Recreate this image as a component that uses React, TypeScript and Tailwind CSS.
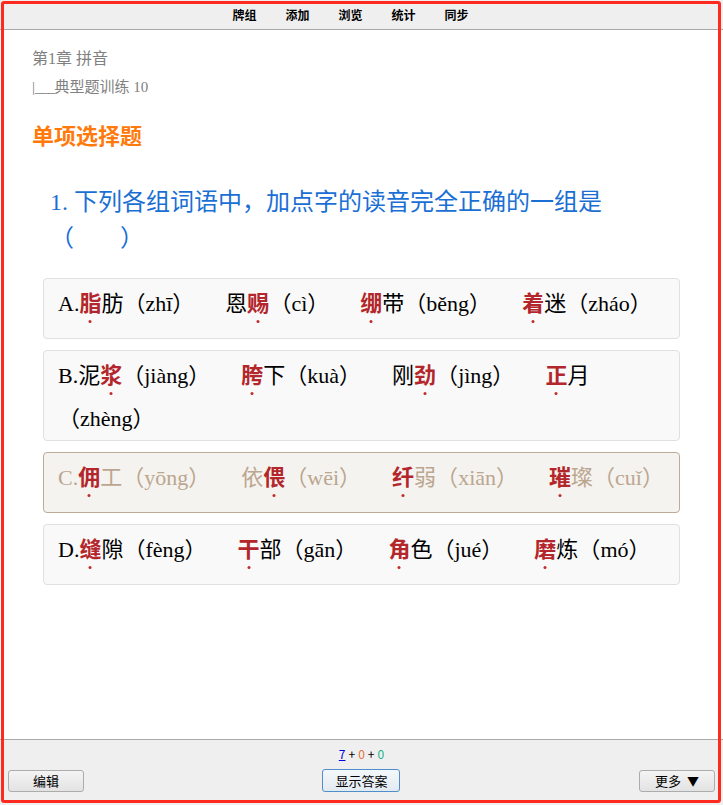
import React from 'react';

type Item = { pre: string; em: string; post: string; py: string };
type Option = { label: string; items: Item[]; muted?: boolean };

const options: Option[] = [
  {
    label: 'A.',
    items: [
      { pre: '', em: '脂', post: '肪', py: 'zhī' },
      { pre: '恩', em: '赐', post: '', py: 'cì' },
      { pre: '', em: '绷', post: '带', py: 'běng' },
      { pre: '', em: '着', post: '迷', py: 'zháo' },
    ],
  },
  {
    label: 'B.',
    items: [
      { pre: '泥', em: '浆', post: '', py: 'jiàng' },
      { pre: '', em: '胯', post: '下', py: 'kuà' },
      { pre: '刚', em: '劲', post: '', py: 'jìng' },
      { pre: '', em: '正', post: '月', py: 'zhèng' },
    ],
  },
  {
    label: 'C.',
    muted: true,
    items: [
      { pre: '', em: '佣', post: '工', py: 'yōng' },
      { pre: '依', em: '偎', post: '', py: 'wēi' },
      { pre: '', em: '纤', post: '弱', py: 'xiān' },
      { pre: '', em: '璀', post: '璨', py: 'cuǐ' },
    ],
  },
  {
    label: 'D.',
    items: [
      { pre: '', em: '缝', post: '隙', py: 'fèng' },
      { pre: '', em: '干', post: '部', py: 'gān' },
      { pre: '', em: '角', post: '色', py: 'jué' },
      { pre: '', em: '磨', post: '炼', py: 'mó' },
    ],
  },
];

function Em({ ch }: { ch: string }) {
  return (
    <span className="relative inline-block pb-[13px] font-bold leading-[30px] text-[#b3262b]">
      {ch}
      <span className="absolute left-1/2 top-[31px] h-[3px] w-[3px] -translate-x-1/2 rounded-full bg-[#c22a2a]" />
    </span>
  );
}

function OptionBox({ opt }: { opt: Option }) {
  return (
    <div
      className={
        opt.muted
          ? 'mx-[11px] rounded-[4px] border border-[#bcab98] bg-[#f5f3ef] pb-[6px] pl-[14px] pr-[8px] pt-[10px] text-[22px] leading-[30px] text-[#bba690]'
          : 'mx-[11px] rounded-[4px] border border-[#e0e0e0] bg-[#f9f9f9] pb-[6px] pl-[14px] pr-[8px] pt-[10px] text-[22px] leading-[30px] text-black'
      }
    >
      {opt.label}
      {opt.items.map((it, i) => (
        <React.Fragment key={i}>
          {i > 0 && <span className="inline-block w-[31px]" />}
          {it.pre}
          <Em ch={it.em} />
          {it.post}（{it.py}）
        </React.Fragment>
      ))}
    </div>
  );
}

export default function App() {
  return (
    <div className="relative flex h-[805px] w-[723px] flex-col overflow-hidden bg-white font-['Liberation_Serif','Noto_Sans_CJK_SC',serif]">
      {/* top nav */}
      <div className="flex h-[30px] shrink-0 items-center justify-center gap-[29px] border-b border-[#a9a9a9] bg-[#efefef] pr-[22px] font-['Noto_Sans_CJK_SC',sans-serif] text-[12px] font-bold text-black">
        <span>牌组</span>
        <span>添加</span>
        <span>浏览</span>
        <span>统计</span>
        <span>同步</span>
      </div>

      {/* card */}
      <div className="flex-1 pl-[32px] pr-[32px] pt-[15px]">
        <div className="text-[16px] leading-[28px] text-[#808080]">第1章 拼音</div>
        <div className="text-[15px] leading-[28px] text-[#808080]">
          |<span className="tracking-[-1px]">___</span>典型题训练 10
        </div>
        <div className="mt-[18px] font-['Noto_Sans_CJK_SC',sans-serif] text-[22px] font-bold leading-[30px] text-[#ff7a0a]">
          单项选择题
        </div>
        <div className="ml-[18px] mt-[35px] w-[568px] text-[24px] leading-[36px] text-[#1a6fd4]">
          1. 下列各组词语中，加点字的读音完全正确的一组是<span className="pr-[46px]">（</span>）
        </div>
        <div className="mt-[22px] flex flex-col gap-[11px]">
          {options.map((o) => (
            <OptionBox key={o.label} opt={o} />
          ))}
        </div>
      </div>

      {/* bottom bar */}
      <div className="h-[66px] shrink-0 border-t border-[#a9a9a9] bg-[#efefef] pt-[7px] font-['Noto_Sans_CJK_SC',sans-serif]">
        <div className="flex h-[14px] items-center justify-center gap-[3px] text-[12px] leading-[14px]">
          <span className="text-[#0000e0] underline">7</span>
          <span className="text-black">+</span>
          <span className="text-[#e8703a]">0</span>
          <span className="text-black">+</span>
          <span className="text-[#19b38a]">0</span>
        </div>
        <div className="mt-[8px] grid grid-cols-3 items-center px-[8px]">
          <button className="h-[22px] w-[76px] justify-self-start rounded-[3px] border border-[#acacac] bg-gradient-to-b from-[#f4f4f4] to-[#e3e3e3] text-[13px] leading-[20px] text-black">
            编辑
          </button>
          <button className="h-[23px] w-[78px] justify-self-center rounded-[3px] border border-[#4f8ec9] bg-gradient-to-b from-[#f4f8fb] to-[#e2eaf1] text-[13px] leading-[21px] text-black">
            显示答案
          </button>
          <button className="flex h-[22px] w-[76px] items-center justify-center gap-[6px] justify-self-end rounded-[3px] border border-[#acacac] bg-gradient-to-b from-[#f4f4f4] to-[#e3e3e3] text-[13px] leading-[20px] text-black">
            <span>更多</span>
            <span className="text-[12px]">▼</span>
          </button>
        </div>
      </div>

      {/* red highlight frame over the page */}
      <div className="pointer-events-none absolute bottom-[2px] left-[1px] right-[2px] top-[1px] rounded-[3px] border-[3px] border-[#ff2a1f]" />
    </div>
  );
}
